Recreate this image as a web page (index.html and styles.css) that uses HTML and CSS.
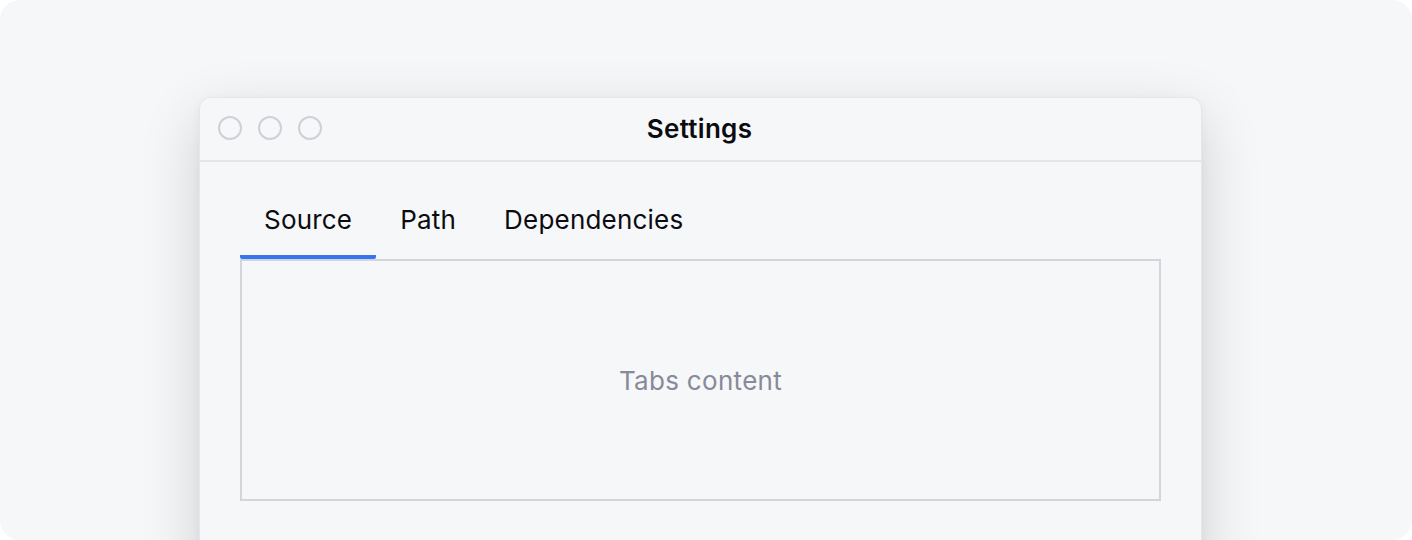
FILE: index.html
```html
<!DOCTYPE html>
<html lang="en">
<head>
<meta charset="utf-8">
<title>Settings</title>
<link rel="stylesheet" href="styles.css">
</head>
<body>
<div class="stage">
  <div class="window">
    <div class="titlebar">
      <div class="lights">
        <span class="light"></span>
        <span class="light"></span>
        <span class="light"></span>
      </div>
      <div class="title">Settings</div>
    </div>
    <div class="body">
      <div class="tabs">
        <div class="tab active">Source</div>
        <div class="tab">Path</div>
        <div class="tab">Dependencies</div>
      </div>
      <div class="panel">Tabs content</div>
    </div>
  </div>
</div>
</body>
</html>
```
FILE: styles.css
```css
* { box-sizing: border-box; }
html, body { margin: 0; padding: 0; background: #ffffff; }
body {
  font-family: Inter, "Noto Sans", sans-serif;
  width: 1412px;
  height: 540px;
  overflow: hidden;
}
.stage {
  width: 1412px;
  height: 540px;
  background: #f6f7f9;
  border-radius: 20px;
  padding-top: 97px;
  padding-left: 199px;
  overflow: hidden;
}
.window {
  width: 1003px;
  height: 480px;
  background: #f6f7f9;
  border: 1px solid #e6e7ea;
  border-radius: 12px;
  box-shadow: 0 20px 60px rgba(0, 0, 0, 0.16), 0 2px 8px rgba(0, 0, 0, 0.04);
}
.titlebar {
  position: relative;
  height: 64px;
  border-bottom: 2px solid #e5e6ea;
  display: flex;
  align-items: center;
  justify-content: center;
}
.lights {
  position: absolute;
  left: 18px;
  top: 18px;
  display: flex;
  gap: 16px;
}
.light {
  width: 24px;
  height: 24px;
  border-radius: 50%;
  border: 2px solid #cfd0d8;
}
.title {
  font-size: 26px;
  font-weight: 600;
  color: #0c0c10;
  letter-spacing: 0.3px;
  margin-top: -2px;
  margin-left: -2px;
}
.body {
  padding: 33px 40px 0 40px;
}
.tabs {
  display: flex;
}
.tab {
  padding: 10px 24px 20px 24px;
  font-size: 26px;
  line-height: 30px;
  letter-spacing: 0.2px;
  color: #0c0c10;
  border-bottom: 4px solid transparent;
}
.tab.active {
  border-bottom-color: #3775f0;
  border-radius: 2px;
}
.panel {
  height: 242px;
  border: 2px solid #d3d5db;
  display: flex;
  align-items: center;
  justify-content: center;
  font-size: 26px;
  letter-spacing: 0.3px;
  color: #878a9a;
}
```
